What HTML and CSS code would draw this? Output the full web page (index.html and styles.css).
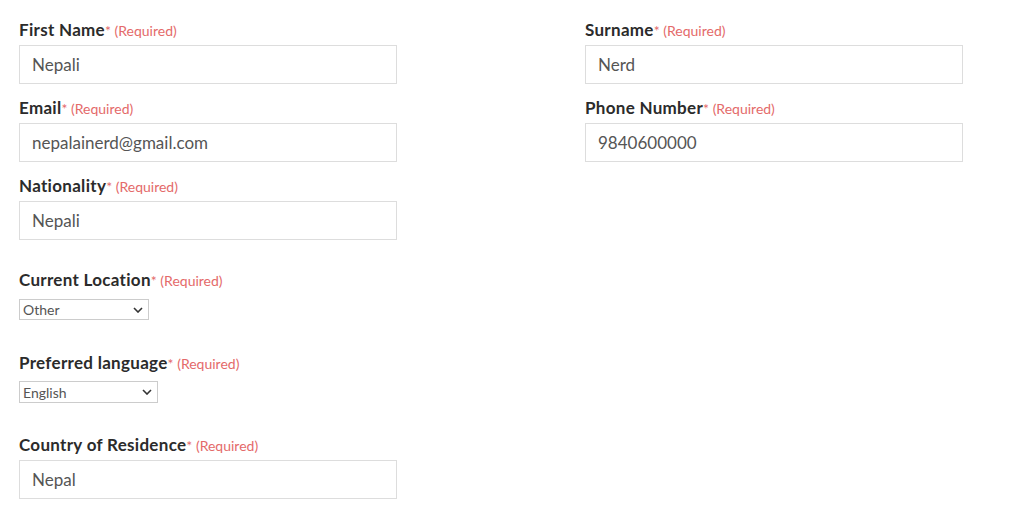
FILE: index.html
```html
<!DOCTYPE html>
<html lang="en">
<head>
    <meta charset="UTF-8">
    <meta name="viewport" content="width=device-width, initial-scale=1.0">
    <title>Application Form</title>
    <link rel="stylesheet" href="styles.css">
</head>
<body>
    <form class="apply-form">
        <div class="field">
            <label for="firstName">First Name<span class="req">* (Required)</span></label>
            <input type="text" id="firstName" value="Nepali">
        </div>
        <div class="field">
            <label for="surname">Surname<span class="req">* (Required)</span></label>
            <input type="text" id="surname" value="Nerd">
        </div>
        <div class="field">
            <label for="email">Email<span class="req">* (Required)</span></label>
            <input type="text" id="email" value="nepalainerd@gmail.com">
        </div>
        <div class="field">
            <label for="phone">Phone Number<span class="req">* (Required)</span></label>
            <input type="text" id="phone" value="9840600000">
        </div>
        <div class="field left">
            <label for="nationality">Nationality<span class="req">* (Required)</span></label>
            <input type="text" id="nationality" value="Nepali">
        </div>

        <div class="field left select-field">
            <label for="location">Current Location<span class="req">* (Required)</span></label>
            <div class="select-wrap location">
                <select id="location">
                    <option>Other</option>
                    <option>Nepal</option>
                </select>
                <svg class="chevron" viewBox="0 0 10 6" width="10" height="6"><path d="M1 1l4 4 4-4" fill="none" stroke="#333" stroke-width="1.6"/></svg>
            </div>
        </div>

        <div class="field left select-field">
            <label for="language">Preferred language<span class="req">* (Required)</span></label>
            <div class="select-wrap language">
                <select id="language">
                    <option>English</option>
                    <option>Nepali</option>
                </select>
                <svg class="chevron" viewBox="0 0 10 6" width="10" height="6"><path d="M1 1l4 4 4-4" fill="none" stroke="#333" stroke-width="1.6"/></svg>
            </div>
        </div>

        <div class="field left">
            <label for="residence">Country of Residence<span class="req">* (Required)</span></label>
            <input type="text" id="residence" value="Nepal">
        </div>
    </form>
</body>
</html>
```

FILE: styles.css
```css
/* General styles */
body {
    margin: 0;
    padding: 19px 19px;
    background: #fff;
    font-family: Lato, "Open Sans", sans-serif;
    color: #333;
}

/* Two column form grid */
.apply-form {
    display: grid;
    grid-template-columns: 378px 378px;
    column-gap: 188px;
    row-gap: 13px;
    align-items: start;
}

.field {
    display: flex;
    flex-direction: column;
    gap: 3px;
}

.field.left {
    grid-column: 1;
}

/* selects sit further apart than the text inputs */
.select-field {
    gap: 7px;
    margin-top: 16px;
}

.select-field + .select-field {
    gap: 6px;
    margin-top: 19px;
}

.select-field + .field:not(.select-field) {
    margin-top: 18px;
}

label {
    font-size: 17px;
    font-weight: 700;
    letter-spacing: 0.3px;
    line-height: 22px;
    color: #2b2b2b;
}

.req {
    font-size: 14px;
    font-weight: 400;
    letter-spacing: 0;
    color: #e46a6a;
}

input[type="text"] {
    box-sizing: border-box;
    width: 100%;
    height: 39px;
    padding: 0 12px;
    font-family: inherit;
    font-size: 17px;
    color: #555;
    border: 1px solid #ddd;
    border-radius: 0;
    outline: none;
}

/* Select boxes */
.select-wrap {
    position: relative;
}

.select-wrap.location { width: 130px; }
.select-wrap.language { width: 139px; }

select {
    appearance: none;
    -webkit-appearance: none;
    box-sizing: border-box;
    width: 100%;
    height: 21px;
    padding: 0 3px;
    font-family: inherit;
    font-size: 14px;
    color: #555;
    background: #fff;
    border: 1px solid #ccc;
    border-radius: 0;
}

.language select {
    height: 22px;
}

.chevron {
    position: absolute;
    right: 6px;
    top: 8px;
    pointer-events: none;
}
```
